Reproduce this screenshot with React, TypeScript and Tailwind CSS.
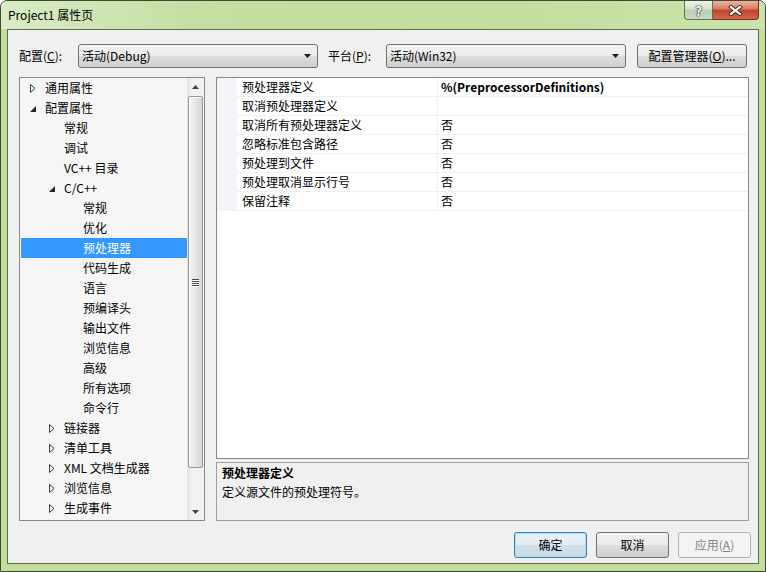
import React from "react"

type Node = { label: string; level: number; arrow?: "open" | "closed"; selected?: boolean }

const tree: Node[] = [
  { label: "通用属性", level: 0, arrow: "closed" },
  { label: "配置属性", level: 0, arrow: "open" },
  { label: "常规", level: 1 },
  { label: "调试", level: 1 },
  { label: "VC++ 目录", level: 1 },
  { label: "C/C++", level: 1, arrow: "open" },
  { label: "常规", level: 2 },
  { label: "优化", level: 2 },
  { label: "预处理器", level: 2, selected: true },
  { label: "代码生成", level: 2 },
  { label: "语言", level: 2 },
  { label: "预编译头", level: 2 },
  { label: "输出文件", level: 2 },
  { label: "浏览信息", level: 2 },
  { label: "高级", level: 2 },
  { label: "所有选项", level: 2 },
  { label: "命令行", level: 2 },
  { label: "链接器", level: 1, arrow: "closed" },
  { label: "清单工具", level: 1, arrow: "closed" },
  { label: "XML 文档生成器", level: 1, arrow: "closed" },
  { label: "浏览信息", level: 1, arrow: "closed" },
  { label: "生成事件", level: 1, arrow: "closed" },
]

const props = [
  { name: "预处理器定义", value: "%(PreprocessorDefinitions)", bold: true },
  { name: "取消预处理器定义", value: "" },
  { name: "取消所有预处理器定义", value: "否" },
  { name: "忽略标准包含路径", value: "否" },
  { name: "预处理到文件", value: "否" },
  { name: "预处理取消显示行号", value: "否" },
  { name: "保留注释", value: "否" },
]

const btnBg =
  "bg-[linear-gradient(#f2f2f2,#ebebeb_50%,#dddddd_50%,#cfcfcf)] border border-[#707070] rounded-[3px]"

function Arrow({ kind }: { kind?: "open" | "closed" }) {
  if (kind === "closed")
    return (
      <svg width="6" height="9" viewBox="0 0 6 9" className="shrink-0">
        <path d="M0.5 0.5 L5 4.5 L0.5 8.5 Z" fill="none" stroke="#3c3c3c" strokeWidth="1" />
      </svg>
    )
  if (kind === "open")
    return (
      <svg width="6" height="9" viewBox="0 0 6 9" className="shrink-0">
        <path d="M6 2 L6 8 L0 8 Z" fill="#262626" />
      </svg>
    )
  return <span className="w-[6px] shrink-0" />
}

function DropArrow() {
  return (
    <svg width="8" height="4" viewBox="0 0 8 4">
      <path d="M0 0 H7 L3.5 4 Z" fill="#1a1a1a" />
    </svg>
  )
}

function Combo({ text }: { text: string }) {
  return (
    <div className={`${btnBg} w-[240px] h-[24px] flex items-center pl-[3px] pr-[5px]`}>
      <span className="flex-1">{text}</span>
      <DropArrow />
    </div>
  )
}

function ScrollBar() {
  return (
    <div className="w-[17px] flex flex-col bg-[linear-gradient(to_right,#e3e3e3,#f2f2f2_30%,#f2f2f2)]">
      <div className="h-[17px] flex items-center justify-center">
        <svg width="7" height="4" viewBox="0 0 7 4">
          <path d="M0 4 H7 L3.5 0 Z" fill="#404040" />
        </svg>
      </div>
      <div className="mt-[1px] h-[372px] mx-[1px] rounded-[2px] border border-[#969696] bg-[linear-gradient(to_right,#f4f4f4,#e8e8e8_45%,#d6d6d6)] shadow-[inset_1px_1px_0_#ffffff] flex items-center justify-center">
        <div className="flex flex-col gap-[1px]">
          {[0, 1, 2, 3].map((i) => (
            <div key={i} className="w-[7px] h-[1px] bg-[#4a4a4a] shadow-[0_1px_0_#ffffff]" />
          ))}
        </div>
      </div>
      <div className="flex-1" />
      <div className="h-[17px] flex items-center justify-center">
        <svg width="7" height="4" viewBox="0 0 7 4">
          <path d="M0 0 H7 L3.5 4 Z" fill="#404040" />
        </svg>
      </div>
    </div>
  )
}

export default function App() {
  return (
    <div className="w-[766px] h-[572px] flex flex-col border border-[#3b4a30] rounded-t-[7px] bg-[#c2dd9c] text-[12px] text-black font-['Noto_Sans_CJK_SC',sans-serif] overflow-hidden">
      {/* title bar */}
      <div className="h-[28px] shrink-0 flex items-start bg-[linear-gradient(to_right,#d9ecc6,#c5dfa2_25%,#c2dd9c_60%,#cbe3ab)]">
        <div className="flex-1 h-[28px] flex items-center pl-[7px] text-[12px] leading-none">Project1 属性页</div>
        <div className="flex mr-[6px]">
          <div className="w-[29px] h-[19px] border border-[#5f6e55] border-t-0 rounded-bl-[4px] bg-[linear-gradient(#eef5ea,#d5e3cd_45%,#bccfb2_50%,#c9dac0)] flex items-center justify-center">
            <span className="text-white font-bold text-[13px] leading-none [text-shadow:0_0_1px_#303030,0_0_1px_#303030,0_0_2px_#303030]">?</span>
          </div>
          <div className="w-[46px] h-[19px] border border-[#6b3326] border-t-0 border-l-0 rounded-br-[4px] bg-[linear-gradient(#ecb3a3,#d87a63_45%,#c4432b_50%,#d2664b)] flex items-center justify-center">
            <svg width="15" height="11" viewBox="0 0 15 11">
              <path d="M3 2 L12 9 M12 2 L3 9" stroke="#3a2a26" strokeWidth="4" strokeLinecap="square" />
              <path d="M3 2 L12 9 M12 2 L3 9" stroke="#ffffff" strokeWidth="2.2" strokeLinecap="square" />
            </svg>
          </div>
        </div>
      </div>

      {/* client area */}
      <div className="flex-1 mx-[6px] mb-[7px] border border-[#5c6b4d] bg-[#f0f0f0] flex flex-col">
        {/* config row */}
        <div className="flex items-center pl-[11px] pt-[14px]">
          <span className="w-[59px]">
            配置(<u>C</u>):
          </span>
          <Combo text="活动(Debug)" />
          <span className="w-[58px] ml-[10px]">
            平台(<u>P</u>):
          </span>
          <Combo text="活动(Win32)" />
          <div className={`${btnBg} ml-[11px] w-[110px] h-[24px] flex items-center justify-center`}>
            配置管理器(<u>O</u>)...
          </div>
        </div>

        {/* main panels */}
        <div className="flex pl-[11px] mt-[9px]">
          {/* tree */}
          <div className="w-[186px] h-[444px] border border-[#828790] bg-[#f6f6f6] flex">
            <div className="flex-1 flex flex-col">
              {tree.map((n, i) => (
                <div
                  key={i}
                  className={`h-[20px] flex items-center ${n.selected ? "bg-[#3399ff] text-white ml-[1px]" : ""}`}
                >
                  <span className={`shrink-0 ${n.selected ? "w-[9px]" : "w-[10px]"}`} />
                  <span className="shrink-0" style={{ width: n.level * 19 }} />
                  <Arrow kind={n.arrow} />
                  <span className="ml-[9px] whitespace-nowrap">{n.label}</span>
                </div>
              ))}
            </div>
            <ScrollBar />
          </div>

          {/* right column */}
          <div className="ml-[11px] w-[533px] flex flex-col gap-[3px]">
            <div className="h-[382px] border border-[#828790] bg-white">
              {props.map((p, i) => (
                <div key={i} className="h-[19px] flex">
                  <div className="w-[20px] bg-[#f3f5f9]" />
                  <div className="w-[201px] border-b border-r border-[#f0f0f0] pl-[5px] flex items-center whitespace-nowrap">
                    {p.name}
                  </div>
                  <div className={`flex-1 border-b border-[#f0f0f0] pl-[3px] flex items-center ${p.bold ? "font-bold" : ""}`}>
                    {p.value}
                  </div>
                </div>
              ))}
            </div>
            <div className="h-[59px] border border-[#a0a0a0] bg-[#f0f0f0] px-[5px] leading-[19px]">
              <div className="font-bold">预处理器定义</div>
              <div>定义源文件的预处理符号。</div>
            </div>
          </div>
        </div>

        {/* buttons */}
        <div className="flex justify-end gap-[9px] pr-[7px] mt-[11px]">
          <div className="w-[73px] h-[26px] rounded-[3px] border border-[#3c7fb1] shadow-[inset_0_0_0_1px_#a9def8] bg-[linear-gradient(#eaf3f8,#e1ecf3_50%,#d2e0ea_50%,#c9d9e4)] flex items-center justify-center">
            确定
          </div>
          <div className={`${btnBg} w-[73px] h-[26px] flex items-center justify-center`}>取消</div>
          <div className="w-[73px] h-[26px] rounded-[3px] border border-[#adb2b5] bg-[#f4f4f4] text-[#838383] flex items-center justify-center">
            应用(<u>A</u>)
          </div>
        </div>
      </div>
    </div>
  )
}
